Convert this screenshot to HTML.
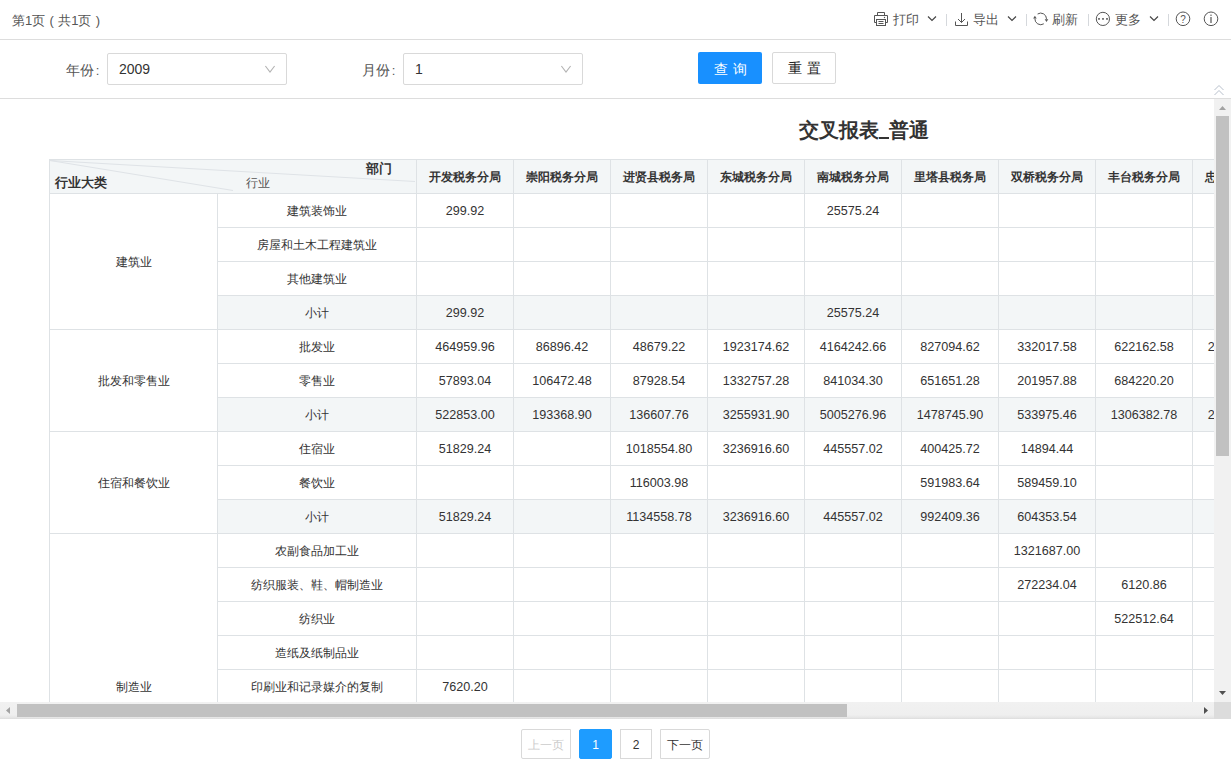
<!DOCTYPE html>
<html><head><meta charset="utf-8">
<style>
*{box-sizing:border-box;margin:0;padding:0}
html,body{width:1231px;height:768px;overflow:hidden;background:#fff}
body{position:relative;font-family:"Liberation Sans",sans-serif;color:#333}
.ab{position:absolute}
.tb{position:absolute;top:0;left:0;width:1231px;height:40px;border-bottom:1px solid #dddddd}
.tbt{position:absolute;top:12px;font-size:13px;line-height:17px;color:#555;white-space:nowrap}
.sep{position:absolute;top:14px;width:1px;height:12px;background:#d5d8dc}
.flt{position:absolute;top:40px;left:0;width:1231px;height:59px;border-bottom:1px solid #dddddd}
.lbl{position:absolute;top:61.5px;font-size:14px;line-height:17px;color:#555;white-space:nowrap}
.inp{position:absolute;top:53px;width:180px;height:32px;border:1px solid #d9d9d9;border-radius:2px;font-size:14px;line-height:30px;padding-left:11px;color:#333}
.btn{position:absolute;top:52px;width:64px;height:32px;border-radius:2px;font-size:14px;line-height:32px;text-align:center;letter-spacing:5px;text-indent:5px}
.c{position:absolute;border-right:1px solid #dee2e5;border-bottom:1px solid #dee2e5;text-align:center;white-space:nowrap;overflow:hidden;color:#333}
.h{background:#f3f6f7;font-weight:bold;font-size:12px;line-height:35px}
.n{font-size:12.6px;line-height:35px}
.t{font-size:12px;line-height:35px}
.g{background:#f3f6f7}
.pg{position:absolute;top:729px;height:30px;border:1px solid #d9d9d9;font-size:12px;line-height:30px;text-align:center;background:#fff}
</style></head><body>

<div class="tb"></div>
<div class="tbt" style="left:12px;top:12px">第1页<span style="display:inline-block;width:13px;text-align:center">(</span>共1页<span style="display:inline-block;width:13px;text-align:center">)</span></div>
<svg class="ab" style="left:0;top:0" width="1231" height="40" viewBox="0 0 1231 40">
<path d="M877.5 15V12.5H884.5V15" fill="none" stroke="#555" stroke-width="1"/>
<path d="M876.5 22.5H874.5V15.5H887.5V22.5H885.5" fill="none" stroke="#555" stroke-width="1"/>
<rect x="876.5" y="19.5" width="9" height="6" fill="none" stroke="#555" stroke-width="1"/>
<path d="M878.5 21.5H883.5M878.5 23.5H883.5" fill="none" stroke="#555" stroke-width="1"/>
<circle cx="884.5" cy="17.5" r="0.7" fill="#555"/>
<path d="M928 16.5L932 20.5L936 16.5" fill="none" stroke="#444" stroke-width="1.15"/>
<path d="M1008 16.5L1012 20.5L1016 16.5" fill="none" stroke="#444" stroke-width="1.15"/>
<path d="M1150 16.5L1154 20.5L1158 16.5" fill="none" stroke="#444" stroke-width="1.15"/>
<path d="M961.5 13V22.5M958 19L961.5 22.5L965 19" fill="none" stroke="#555" stroke-width="1"/>
<path d="M955.5 21.5V25.5H967.5V21.5" fill="none" stroke="#555" stroke-width="1"/>
<path d="M1037.6 14A5.8 5.8 0 0 1 1046.5 18.9" fill="none" stroke="#555" stroke-width="1"/>
<path d="M1044.7 19.2L1048.3 19.2L1046.5 21.9Z" fill="#555"/>
<path d="M1043.8 23.8A5.8 5.8 0 0 1 1034.9 18.6" fill="none" stroke="#555" stroke-width="1"/>
<path d="M1033.1 18.4L1036.7 18.4L1034.9 15.7Z" fill="#555"/>
<circle cx="1102.9" cy="18.9" r="6.6" fill="none" stroke="#555" stroke-width="1"/>
<rect x="1098.2" y="18.1" width="1.6" height="1.6" fill="#444"/>
<rect x="1102.2" y="18.1" width="1.6" height="1.6" fill="#444"/>
<rect x="1106.2" y="18.1" width="1.6" height="1.6" fill="#444"/>
<circle cx="1183" cy="18.8" r="6.8" fill="none" stroke="#555" stroke-width="1"/>
<circle cx="1211" cy="18.8" r="6.8" fill="none" stroke="#555" stroke-width="1"/>
<text x="1183" y="22.5" font-size="10" text-anchor="middle" fill="#555" font-family="Liberation Sans">?</text>
<rect x="1210.4" y="17" width="1.2" height="6" fill="#555"/><rect x="1210.4" y="14.6" width="1.2" height="1.3" fill="#555"/>
</svg>
<div class="sep" style="left:946px"></div>
<div class="sep" style="left:1026px"></div>
<div class="sep" style="left:1088px"></div>
<div class="sep" style="left:1168px"></div>
<div class="tbt" style="left:893px;top:11px">打印</div>
<div class="tbt" style="left:973px;top:11px">导出</div>
<div class="tbt" style="left:1052px;top:11px">刷新</div>
<div class="tbt" style="left:1115px;top:11px">更多</div>
<div class="flt"></div>
<div class="lbl" style="left:66px">年份<span style="display:inline-block;width:7px;text-align:center;font-size:13px">:</span></div>
<div class="inp" style="left:107px">2009</div>
<div class="lbl" style="left:362px">月份<span style="display:inline-block;width:7px;text-align:center;font-size:13px">:</span></div>
<div class="inp" style="left:403px">1</div>
<svg class="ab" style="left:0;top:40px" width="700" height="58" viewBox="0 40 700 58">
<path d="M265.4 66L270 72.2L274.6 66" fill="none" stroke="#b3b3b3" stroke-width="1.1"/>
<path d="M561.4 66L566 72.2L570.6 66" fill="none" stroke="#b3b3b3" stroke-width="1.1"/>
</svg>
<div class="btn" style="left:698px;background:#1890ff;color:#fff;line-height:34px">查询</div>
<div class="btn" style="left:772px;border:1px solid #d9d9d9;color:#222;line-height:30px">重置</div>
<div class="ab" style="left:0;top:99px;width:1214px;height:603px;overflow:hidden">
<div class="ab" style="left:799px;top:18px;font-size:20px;line-height:26px;font-weight:bold;color:#333;white-space:nowrap">交叉报表<span style="display:inline-block;width:10px;height:2px;background:#333;vertical-align:-2px"></span>普通</div>
<div class="ab" style="left:49px;top:60px;width:1px;height:543px;background:#dee2e5"></div>
<div class="ab" style="left:49px;top:60px;width:1240px;height:1px;background:#dee2e5"></div>
<div class="c h" style="left:50px;top:61px;width:367px;height:34px"></div>
<svg class="ab" style="left:49px;top:60px" width="368" height="35" viewBox="49 159 368 35"><path d="M50 160.5L415 181.5M50 160.5L233 190.5" stroke="#dfe3e7" stroke-width="1" fill="none"/></svg>
<div class="ab" style="left:366px;top:61px;font-size:13px;line-height:17px;font-weight:bold;color:#333;white-space:nowrap">部门</div>
<div class="ab" style="left:55px;top:75px;font-size:13px;line-height:17px;font-weight:bold;color:#333;white-space:nowrap">行业大类</div>
<div class="ab" style="left:246px;top:76px;font-size:12px;line-height:17px;color:#555;white-space:nowrap">行业</div>
<div class="c h" style="left:417px;top:61px;width:97px;height:34px">开发税务分局</div>
<div class="c h" style="left:514px;top:61px;width:97px;height:34px">崇阳税务分局</div>
<div class="c h" style="left:611px;top:61px;width:97px;height:34px">进贤县税务局</div>
<div class="c h" style="left:708px;top:61px;width:97px;height:34px">东城税务分局</div>
<div class="c h" style="left:805px;top:61px;width:97px;height:34px">南城税务分局</div>
<div class="c h" style="left:902px;top:61px;width:97px;height:34px">里塔县税务局</div>
<div class="c h" style="left:999px;top:61px;width:97px;height:34px">双桥税务分局</div>
<div class="c h" style="left:1096px;top:61px;width:97px;height:34px">丰台税务分局</div>
<div class="c h" style="left:1193px;top:61px;width:97px;height:34px">忠县税务分局</div>
<div class="c t" style="left:50px;top:95px;width:168px;height:136px;line-height:137px">建筑业</div>
<div class="c t" style="left:50px;top:231px;width:168px;height:102px;line-height:103px">批发和零售业</div>
<div class="c t" style="left:50px;top:333px;width:168px;height:102px;line-height:103px">住宿和餐饮业</div>
<div class="c t" style="left:50px;top:435px;width:168px;height:204px;line-height:306px;border-bottom:none">制造业</div>
<div class="c t" style="left:218px;top:95px;width:199px;height:34px">建筑装饰业</div>
<div class="c n" style="left:417px;top:95px;width:97px;height:34px">299.92</div>
<div class="c n" style="left:514px;top:95px;width:97px;height:34px"></div>
<div class="c n" style="left:611px;top:95px;width:97px;height:34px"></div>
<div class="c n" style="left:708px;top:95px;width:97px;height:34px"></div>
<div class="c n" style="left:805px;top:95px;width:97px;height:34px">25575.24</div>
<div class="c n" style="left:902px;top:95px;width:97px;height:34px"></div>
<div class="c n" style="left:999px;top:95px;width:97px;height:34px"></div>
<div class="c n" style="left:1096px;top:95px;width:97px;height:34px"></div>
<div class="c n" style="left:1193px;top:95px;width:97px;height:34px"></div>
<div class="c t" style="left:218px;top:129px;width:199px;height:34px">房屋和土木工程建筑业</div>
<div class="c n" style="left:417px;top:129px;width:97px;height:34px"></div>
<div class="c n" style="left:514px;top:129px;width:97px;height:34px"></div>
<div class="c n" style="left:611px;top:129px;width:97px;height:34px"></div>
<div class="c n" style="left:708px;top:129px;width:97px;height:34px"></div>
<div class="c n" style="left:805px;top:129px;width:97px;height:34px"></div>
<div class="c n" style="left:902px;top:129px;width:97px;height:34px"></div>
<div class="c n" style="left:999px;top:129px;width:97px;height:34px"></div>
<div class="c n" style="left:1096px;top:129px;width:97px;height:34px"></div>
<div class="c n" style="left:1193px;top:129px;width:97px;height:34px"></div>
<div class="c t" style="left:218px;top:163px;width:199px;height:34px">其他建筑业</div>
<div class="c n" style="left:417px;top:163px;width:97px;height:34px"></div>
<div class="c n" style="left:514px;top:163px;width:97px;height:34px"></div>
<div class="c n" style="left:611px;top:163px;width:97px;height:34px"></div>
<div class="c n" style="left:708px;top:163px;width:97px;height:34px"></div>
<div class="c n" style="left:805px;top:163px;width:97px;height:34px"></div>
<div class="c n" style="left:902px;top:163px;width:97px;height:34px"></div>
<div class="c n" style="left:999px;top:163px;width:97px;height:34px"></div>
<div class="c n" style="left:1096px;top:163px;width:97px;height:34px"></div>
<div class="c n" style="left:1193px;top:163px;width:97px;height:34px"></div>
<div class="c t g" style="left:218px;top:197px;width:199px;height:34px">小计</div>
<div class="c n g" style="left:417px;top:197px;width:97px;height:34px">299.92</div>
<div class="c n g" style="left:514px;top:197px;width:97px;height:34px"></div>
<div class="c n g" style="left:611px;top:197px;width:97px;height:34px"></div>
<div class="c n g" style="left:708px;top:197px;width:97px;height:34px"></div>
<div class="c n g" style="left:805px;top:197px;width:97px;height:34px">25575.24</div>
<div class="c n g" style="left:902px;top:197px;width:97px;height:34px"></div>
<div class="c n g" style="left:999px;top:197px;width:97px;height:34px"></div>
<div class="c n g" style="left:1096px;top:197px;width:97px;height:34px"></div>
<div class="c n g" style="left:1193px;top:197px;width:97px;height:34px"></div>
<div class="c t" style="left:218px;top:231px;width:199px;height:34px">批发业</div>
<div class="c n" style="left:417px;top:231px;width:97px;height:34px">464959.96</div>
<div class="c n" style="left:514px;top:231px;width:97px;height:34px">86896.42</div>
<div class="c n" style="left:611px;top:231px;width:97px;height:34px">48679.22</div>
<div class="c n" style="left:708px;top:231px;width:97px;height:34px">1923174.62</div>
<div class="c n" style="left:805px;top:231px;width:97px;height:34px">4164242.66</div>
<div class="c n" style="left:902px;top:231px;width:97px;height:34px">827094.62</div>
<div class="c n" style="left:999px;top:231px;width:97px;height:34px">332017.58</div>
<div class="c n" style="left:1096px;top:231px;width:97px;height:34px">622162.58</div>
<div class="c n" style="left:1193px;top:231px;width:97px;height:34px">2186319.42</div>
<div class="c t" style="left:218px;top:265px;width:199px;height:34px">零售业</div>
<div class="c n" style="left:417px;top:265px;width:97px;height:34px">57893.04</div>
<div class="c n" style="left:514px;top:265px;width:97px;height:34px">106472.48</div>
<div class="c n" style="left:611px;top:265px;width:97px;height:34px">87928.54</div>
<div class="c n" style="left:708px;top:265px;width:97px;height:34px">1332757.28</div>
<div class="c n" style="left:805px;top:265px;width:97px;height:34px">841034.30</div>
<div class="c n" style="left:902px;top:265px;width:97px;height:34px">651651.28</div>
<div class="c n" style="left:999px;top:265px;width:97px;height:34px">201957.88</div>
<div class="c n" style="left:1096px;top:265px;width:97px;height:34px">684220.20</div>
<div class="c n" style="left:1193px;top:265px;width:97px;height:34px"></div>
<div class="c t g" style="left:218px;top:299px;width:199px;height:34px">小计</div>
<div class="c n g" style="left:417px;top:299px;width:97px;height:34px">522853.00</div>
<div class="c n g" style="left:514px;top:299px;width:97px;height:34px">193368.90</div>
<div class="c n g" style="left:611px;top:299px;width:97px;height:34px">136607.76</div>
<div class="c n g" style="left:708px;top:299px;width:97px;height:34px">3255931.90</div>
<div class="c n g" style="left:805px;top:299px;width:97px;height:34px">5005276.96</div>
<div class="c n g" style="left:902px;top:299px;width:97px;height:34px">1478745.90</div>
<div class="c n g" style="left:999px;top:299px;width:97px;height:34px">533975.46</div>
<div class="c n g" style="left:1096px;top:299px;width:97px;height:34px">1306382.78</div>
<div class="c n g" style="left:1193px;top:299px;width:97px;height:34px">2254810.66</div>
<div class="c t" style="left:218px;top:333px;width:199px;height:34px">住宿业</div>
<div class="c n" style="left:417px;top:333px;width:97px;height:34px">51829.24</div>
<div class="c n" style="left:514px;top:333px;width:97px;height:34px"></div>
<div class="c n" style="left:611px;top:333px;width:97px;height:34px">1018554.80</div>
<div class="c n" style="left:708px;top:333px;width:97px;height:34px">3236916.60</div>
<div class="c n" style="left:805px;top:333px;width:97px;height:34px">445557.02</div>
<div class="c n" style="left:902px;top:333px;width:97px;height:34px">400425.72</div>
<div class="c n" style="left:999px;top:333px;width:97px;height:34px">14894.44</div>
<div class="c n" style="left:1096px;top:333px;width:97px;height:34px"></div>
<div class="c n" style="left:1193px;top:333px;width:97px;height:34px"></div>
<div class="c t" style="left:218px;top:367px;width:199px;height:34px">餐饮业</div>
<div class="c n" style="left:417px;top:367px;width:97px;height:34px"></div>
<div class="c n" style="left:514px;top:367px;width:97px;height:34px"></div>
<div class="c n" style="left:611px;top:367px;width:97px;height:34px">116003.98</div>
<div class="c n" style="left:708px;top:367px;width:97px;height:34px"></div>
<div class="c n" style="left:805px;top:367px;width:97px;height:34px"></div>
<div class="c n" style="left:902px;top:367px;width:97px;height:34px">591983.64</div>
<div class="c n" style="left:999px;top:367px;width:97px;height:34px">589459.10</div>
<div class="c n" style="left:1096px;top:367px;width:97px;height:34px"></div>
<div class="c n" style="left:1193px;top:367px;width:97px;height:34px"></div>
<div class="c t g" style="left:218px;top:401px;width:199px;height:34px">小计</div>
<div class="c n g" style="left:417px;top:401px;width:97px;height:34px">51829.24</div>
<div class="c n g" style="left:514px;top:401px;width:97px;height:34px"></div>
<div class="c n g" style="left:611px;top:401px;width:97px;height:34px">1134558.78</div>
<div class="c n g" style="left:708px;top:401px;width:97px;height:34px">3236916.60</div>
<div class="c n g" style="left:805px;top:401px;width:97px;height:34px">445557.02</div>
<div class="c n g" style="left:902px;top:401px;width:97px;height:34px">992409.36</div>
<div class="c n g" style="left:999px;top:401px;width:97px;height:34px">604353.54</div>
<div class="c n g" style="left:1096px;top:401px;width:97px;height:34px"></div>
<div class="c n g" style="left:1193px;top:401px;width:97px;height:34px"></div>
<div class="c t" style="left:218px;top:435px;width:199px;height:34px">农副食品加工业</div>
<div class="c n" style="left:417px;top:435px;width:97px;height:34px"></div>
<div class="c n" style="left:514px;top:435px;width:97px;height:34px"></div>
<div class="c n" style="left:611px;top:435px;width:97px;height:34px"></div>
<div class="c n" style="left:708px;top:435px;width:97px;height:34px"></div>
<div class="c n" style="left:805px;top:435px;width:97px;height:34px"></div>
<div class="c n" style="left:902px;top:435px;width:97px;height:34px"></div>
<div class="c n" style="left:999px;top:435px;width:97px;height:34px">1321687.00</div>
<div class="c n" style="left:1096px;top:435px;width:97px;height:34px"></div>
<div class="c n" style="left:1193px;top:435px;width:97px;height:34px"></div>
<div class="c t" style="left:218px;top:469px;width:199px;height:34px">纺织服装、鞋、帽制造业</div>
<div class="c n" style="left:417px;top:469px;width:97px;height:34px"></div>
<div class="c n" style="left:514px;top:469px;width:97px;height:34px"></div>
<div class="c n" style="left:611px;top:469px;width:97px;height:34px"></div>
<div class="c n" style="left:708px;top:469px;width:97px;height:34px"></div>
<div class="c n" style="left:805px;top:469px;width:97px;height:34px"></div>
<div class="c n" style="left:902px;top:469px;width:97px;height:34px"></div>
<div class="c n" style="left:999px;top:469px;width:97px;height:34px">272234.04</div>
<div class="c n" style="left:1096px;top:469px;width:97px;height:34px">6120.86</div>
<div class="c n" style="left:1193px;top:469px;width:97px;height:34px"></div>
<div class="c t" style="left:218px;top:503px;width:199px;height:34px">纺织业</div>
<div class="c n" style="left:417px;top:503px;width:97px;height:34px"></div>
<div class="c n" style="left:514px;top:503px;width:97px;height:34px"></div>
<div class="c n" style="left:611px;top:503px;width:97px;height:34px"></div>
<div class="c n" style="left:708px;top:503px;width:97px;height:34px"></div>
<div class="c n" style="left:805px;top:503px;width:97px;height:34px"></div>
<div class="c n" style="left:902px;top:503px;width:97px;height:34px"></div>
<div class="c n" style="left:999px;top:503px;width:97px;height:34px"></div>
<div class="c n" style="left:1096px;top:503px;width:97px;height:34px">522512.64</div>
<div class="c n" style="left:1193px;top:503px;width:97px;height:34px"></div>
<div class="c t" style="left:218px;top:537px;width:199px;height:34px">造纸及纸制品业</div>
<div class="c n" style="left:417px;top:537px;width:97px;height:34px"></div>
<div class="c n" style="left:514px;top:537px;width:97px;height:34px"></div>
<div class="c n" style="left:611px;top:537px;width:97px;height:34px"></div>
<div class="c n" style="left:708px;top:537px;width:97px;height:34px"></div>
<div class="c n" style="left:805px;top:537px;width:97px;height:34px"></div>
<div class="c n" style="left:902px;top:537px;width:97px;height:34px"></div>
<div class="c n" style="left:999px;top:537px;width:97px;height:34px"></div>
<div class="c n" style="left:1096px;top:537px;width:97px;height:34px"></div>
<div class="c n" style="left:1193px;top:537px;width:97px;height:34px"></div>
<div class="c t" style="left:218px;top:571px;width:199px;height:34px">印刷业和记录媒介的复制</div>
<div class="c n" style="left:417px;top:571px;width:97px;height:34px">7620.20</div>
<div class="c n" style="left:514px;top:571px;width:97px;height:34px"></div>
<div class="c n" style="left:611px;top:571px;width:97px;height:34px"></div>
<div class="c n" style="left:708px;top:571px;width:97px;height:34px"></div>
<div class="c n" style="left:805px;top:571px;width:97px;height:34px"></div>
<div class="c n" style="left:902px;top:571px;width:97px;height:34px"></div>
<div class="c n" style="left:999px;top:571px;width:97px;height:34px"></div>
<div class="c n" style="left:1096px;top:571px;width:97px;height:34px"></div>
<div class="c n" style="left:1193px;top:571px;width:97px;height:34px"></div>
<div class="c t" style="left:218px;top:605px;width:199px;height:34px"></div>
<div class="c n" style="left:417px;top:605px;width:97px;height:34px"></div>
<div class="c n" style="left:514px;top:605px;width:97px;height:34px"></div>
<div class="c n" style="left:611px;top:605px;width:97px;height:34px"></div>
<div class="c n" style="left:708px;top:605px;width:97px;height:34px"></div>
<div class="c n" style="left:805px;top:605px;width:97px;height:34px"></div>
<div class="c n" style="left:902px;top:605px;width:97px;height:34px"></div>
<div class="c n" style="left:999px;top:605px;width:97px;height:34px"></div>
<div class="c n" style="left:1096px;top:605px;width:97px;height:34px"></div>
<div class="c n" style="left:1193px;top:605px;width:97px;height:34px"></div>
</div>
<div class="ab" style="left:1214px;top:99px;width:17px;height:603px;background:#f1f1f1"></div>
<div class="ab" style="left:1216px;top:116px;width:13px;height:340px;background:#c1c1c1"></div>
<div class="ab" style="left:0;top:702px;width:1214px;height:17px;background:linear-gradient(#f1f1f1 0%,#efefef 75%,#e7e7e7 90%,#dcdcdc 100%)"></div>
<div class="ab" style="left:17px;top:704px;width:830px;height:13px;background:#c1c1c1"></div>
<div class="ab" style="left:1214px;top:702px;width:17px;height:17px;background:#dcdcdc"></div>
<svg class="ab" style="left:0;top:0" width="1231" height="768" viewBox="0 0 1231 768">
<path d="M1219 110L1222.5 106L1226 110Z" fill="#a3a3a3"/>
<path d="M1219 691L1222.5 695L1226 691Z" fill="#505050"/>
<path d="M10 707L6 710.5L10 714Z" fill="#a3a3a3"/>
<path d="M1204 707L1208 710.5L1204 714Z" fill="#505050"/>
<path d="M1214.5 90L1219 85.5L1223.5 90M1214.5 95L1219 90.5L1223.5 95" fill="none" stroke="#b8c0cc" stroke-width="1"/>
</svg>
<div class="pg" style="left:521px;width:50px;color:#ccc;border-radius:2px 0 0 2px">上一页</div>
<div class="pg" style="left:579px;width:33px;background:#1e9cff;border-color:#1e9cff;color:#fff;border-radius:2px">1</div>
<div class="pg" style="left:620px;width:32px">2</div>
<div class="pg" style="left:660px;width:50px;border-radius:0 2px 2px 0">下一页</div>
</body></html>
